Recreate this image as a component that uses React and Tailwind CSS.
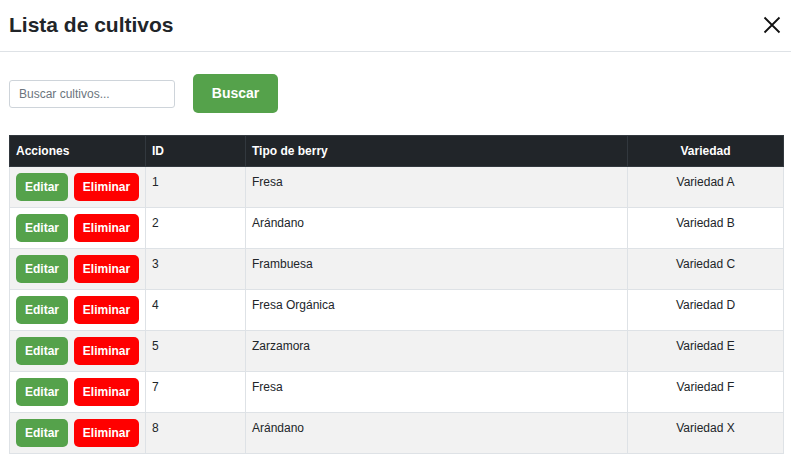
import React from "react";

const rows = [
  ["1", "Fresa", "Variedad A"],
  ["2", "Arándano", "Variedad B"],
  ["3", "Frambuesa", "Variedad C"],
  ["4", "Fresa Orgánica", "Variedad D"],
  ["5", "Zarzamora", "Variedad E"],
  ["7", "Fresa", "Variedad F"],
  ["8", "Arándano", "Variedad X"],
];

export default function App() {
  return (
    <div className="w-[791px] h-[473px] bg-white overflow-hidden text-[#212529]" style={{ fontFamily: '"Liberation Sans", Arial, sans-serif' }}>
      <div className="h-[52px] flex items-center justify-between pl-[9px] pr-[9px] border-b border-[#dee2e6]">
        <h1 className="text-[21px] font-bold leading-none text-[#212529] -mt-[2px]">Lista de cultivos</h1>
        <svg width="18" height="18" viewBox="0 0 18 18" className="mr-[1px] -mt-[2px]">
          <path d="M1.5 1.5 L16.5 16.5 M16.5 1.5 L1.5 16.5" stroke="#111" strokeWidth="1.8" fill="none" />
        </svg>
      </div>
      <div className="flex items-center gap-[18px] pl-[9px] mt-[22px]">
        <input
          placeholder="Buscar cultivos..."
          className="w-[166px] h-[28px] border border-[#ced4da] rounded-[3px] px-[9px] text-[12px] text-[#495057] placeholder:text-[#6c757d] outline-none"
        />
        <button className="w-[85px] h-[39px] bg-[#55a24b] text-white font-bold text-[14px] rounded-[5px]">Buscar</button>
      </div>
      <table className="ml-[9px] mt-[22px] w-[774px] border-collapse table-fixed text-[12px]">
        <colgroup>
          <col className="w-[136px]" />
          <col className="w-[100px]" />
          <col className="w-[382px]" />
          <col className="w-[156px]" />
        </colgroup>
        <thead>
          <tr className="bg-[#212529] text-white h-[31px]">
            <th className="text-left font-bold px-[6px] border border-[#32383e]">Acciones</th>
            <th className="text-left font-bold px-[6px] border border-[#32383e]">ID</th>
            <th className="text-left font-bold px-[6px] border border-[#32383e]">Tipo de berry</th>
            <th className="text-center font-bold px-[6px] border border-[#32383e]">Variedad</th>
          </tr>
        </thead>
        <tbody>
          {rows.map((r, i) => (
            <tr key={i} className={i % 2 === 0 ? "bg-[#f2f2f2]" : "bg-white"}>
              <td className="border border-[#dee2e6] px-[6px] py-[6px] align-top">
                <div className="flex gap-[6px]">
                  <button className="w-[52px] h-[28px] bg-[#55a24b] text-white font-bold text-[12px] rounded-[5px]">Editar</button>
                  <button className="w-[65px] h-[28px] bg-[#ff0000] text-white font-bold text-[12px] rounded-[5px]">Eliminar</button>
                </div>
              </td>
              <td className="border border-[#dee2e6] px-[6px] pt-[6px] align-top leading-[18px]">{r[0]}</td>
              <td className="border border-[#dee2e6] px-[6px] pt-[6px] align-top leading-[18px]">{r[1]}</td>
              <td className="border border-[#dee2e6] px-[6px] pt-[6px] align-top text-center leading-[18px]">{r[2]}</td>
            </tr>
          ))}
        </tbody>
      </table>
    </div>
  );
}
